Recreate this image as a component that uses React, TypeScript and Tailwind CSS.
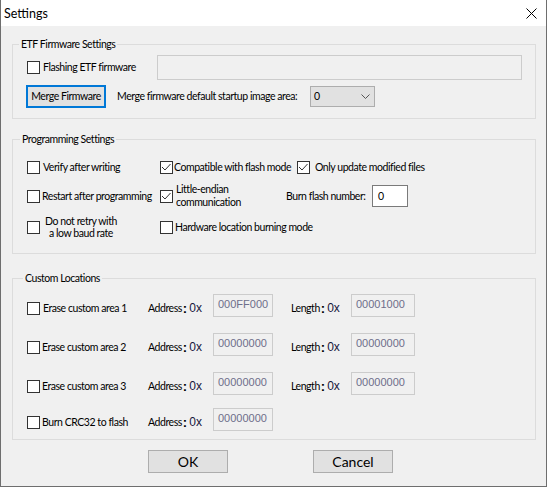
import React from "react";

function Check({ checked = false }: { checked?: boolean }) {
  return (
    <span className="flex h-[13px] w-[13px] shrink-0 items-center justify-center border border-[#333333] bg-white">
      {checked && (
        <svg width="11" height="11" viewBox="0 0 11 11" fill="none">
          <path d="M1 5 L4 8 L9.5 2" stroke="#333333" strokeWidth="1" />
        </svg>
      )}
    </span>
  );
}

function Group({
  title,
  legendClass,
  className,
  children,
}: {
  title: string;
  legendClass: string;
  className?: string;
  children: React.ReactNode;
}) {
  return (
    <fieldset className={"m-0 min-w-0 border border-[#dcdcdc] p-0 " + (className ?? "")}>
      <legend className={"px-[2px] text-[10.5px] leading-[14px] " + legendClass}>{title}</legend>
      {children}
    </fieldset>
  );
}

function HexLabel({ text, width }: { text: string; width: string }) {
  return (
    <div className={"flex items-center whitespace-nowrap " + width}>
      <span>{text}</span>
      <span className="ml-[1px] font-['Liberation_Sans',sans-serif] text-[13px] font-bold leading-none tracking-normal">:</span>
      <span className="ml-[2px] font-['Liberation_Sans',sans-serif] text-[12px] leading-none tracking-normal text-[#16163c]">0x</span>
    </div>
  );
}

function HexInput({ value, width }: { value: string; width: string }) {
  return (
    <div
      className={
        "h-[23px] self-start border border-[#cccccc] bg-[#f0f0f0] pl-[4px] pt-[2px] font-['Liberation_Sans',sans-serif] text-[11px] leading-[14px] tracking-normal text-[#6e6e8a] " +
        width
      }
    >
      {value}
    </div>
  );
}

function LocRow({
  label,
  addr,
  len,
  className,
  gap,
}: {
  label: string;
  addr: string;
  len?: string;
  className?: string;
  gap: string;
}) {
  return (
    <div className={"flex h-[28px] items-center " + (className ?? "")}>
      <div className={"flex w-[121px] items-center whitespace-nowrap " + gap}>
        <Check />
        <span>{label}</span>
      </div>
      <HexLabel text="Address" width="w-[65px]" />
      <HexInput value={addr} width="w-[60px]" />
      {len !== undefined && (
        <>
          <div className="ml-[18px]">
            <HexLabel text="Length" width="w-[60px]" />
          </div>
          <HexInput value={len} width="w-[64px]" />
        </>
      )}
    </div>
  );
}

export default function App() {
  return (
    <div className="flex h-[487px] w-[547px] flex-col overflow-hidden border-x border-b border-[#6e6e6e] bg-[#f0f0f0] font-['Lato',sans-serif] text-[10.5px] leading-[13px] tracking-[-0.45px] text-black">
      <div className="flex h-[26px] shrink-0 items-center justify-between bg-white pl-[3px] pr-[9px]">
        <span className="text-[12.5px] tracking-normal">Settings</span>
        <svg width="11" height="11" viewBox="0 0 11 11" fill="none">
          <path d="M0.5 0.5 L10.5 10.5 M10.5 0.5 L0.5 10.5" stroke="#000000" strokeWidth="1" />
        </svg>
      </div>

      <div className="flex flex-col pl-[11px] pr-[10px] pt-[11px]">
        <Group title="ETF Firmware Settings" legendClass="ml-[6px]">
          <div className="flex flex-col pb-[10px] pl-[14px] pt-[4px]">
            <div className="flex h-[25px] items-center">
              <div className="flex w-[130px] items-center gap-[3px] whitespace-nowrap">
                <Check />
                <span>Flashing ETF firmware</span>
              </div>
              <div className="h-[25px] w-[365px] border border-[#cccccc] bg-[#f0f0f0]" />
            </div>
            <div className="mt-[5px] flex h-[23px] items-center">
              <button className="-ml-[1px] h-[23px] w-[80px] whitespace-nowrap border-2 border-[#0078d7] bg-[#e1e1e1]">
                Merge Firmware
              </button>
              <span className="ml-[11px] w-[193px] whitespace-nowrap">Merge firmware default startup image area:</span>
              <div className="flex h-[21px] w-[65px] items-center justify-between border border-[#adadad] bg-[#e1e1e1] pl-[3px] pr-[4px]">
                <span>0</span>
                <svg width="9" height="5" viewBox="0 0 9 5" fill="none">
                  <path d="M0.5 0.5 L4.5 4.5 L8.5 0.5" stroke="#555555" strokeWidth="1" />
                </svg>
              </div>
            </div>
          </div>
        </Group>

        <Group title="Programming Settings" legendClass="ml-[7px]" className="mt-[13px]">
          <div className="flex flex-col pb-[13px] pl-[14px] pt-[9px]">
            <div className="flex h-[24px] items-center whitespace-nowrap">
              <div className="flex w-[133px] items-center gap-[3px]">
                <Check />
                <span>Verify after writing</span>
              </div>
              <div className="flex w-[137px] items-center gap-[1px]">
                <Check checked />
                <span>Compatible with flash mode</span>
              </div>
              <div className="flex items-center gap-[5px]">
                <Check checked />
                <span>Only update modified files</span>
              </div>
            </div>
            <div className="mt-[4px] flex h-[26px] items-center whitespace-nowrap">
              <div className="flex w-[133px] items-center gap-[2px]">
                <Check />
                <span>Restart after programming</span>
              </div>
              <div className="flex w-[126px] items-center gap-[3px]">
                <Check checked />
                <span className="leading-[13px]">
                  Little-endian
                  <br />
                  communication
                </span>
              </div>
              <span className="w-[86px]">Burn flash number:</span>
              <div className="flex h-[22px] w-[36px] items-center border border-[#7a7a7a] bg-white pl-[5px]">0</div>
            </div>
            <div className="mt-[5px] flex h-[26px] items-center whitespace-nowrap">
              <div className="flex w-[133px] items-center">
                <Check />
                <span className="ml-[2px] w-[78px] text-center leading-[12px]">
                  Do not retry with
                  <br />
                  a low baud rate
                </span>
              </div>
              <div className="flex items-center gap-[2px]">
                <Check />
                <span>Hardware location burning mode</span>
              </div>
            </div>
          </div>
        </Group>

        <Group title="Custom Locations" legendClass="ml-[10px]" className="mt-[17px]">
          <div className="flex flex-col pb-[3px] pl-[14px] pt-[9px]">
            <LocRow label="Erase custom area 1" addr="000FF000" len="00001000" gap="gap-[3px]" />
            <LocRow label="Erase custom area 2" addr="00000000" len="00000000" gap="gap-[2px]" className="mt-[11px]" />
            <LocRow label="Erase custom area 3" addr="00000000" len="00000000" gap="gap-[2px]" className="mt-[11px]" />
            <LocRow label="Burn CRC32 to flash" addr="00000000" gap="gap-[2px]" className="mt-[8px]" />
          </div>
        </Group>

        <div className="mt-[10px] flex">
          <button className="ml-[136px] h-[23px] w-[80px] border border-[#adadad] bg-[#e1e1e1] text-[14px] tracking-normal">
            OK
          </button>
          <button className="ml-[85px] h-[23px] w-[80px] border border-[#adadad] bg-[#e1e1e1] text-[14px] tracking-normal">
            Cancel
          </button>
        </div>
      </div>
    </div>
  );
}
